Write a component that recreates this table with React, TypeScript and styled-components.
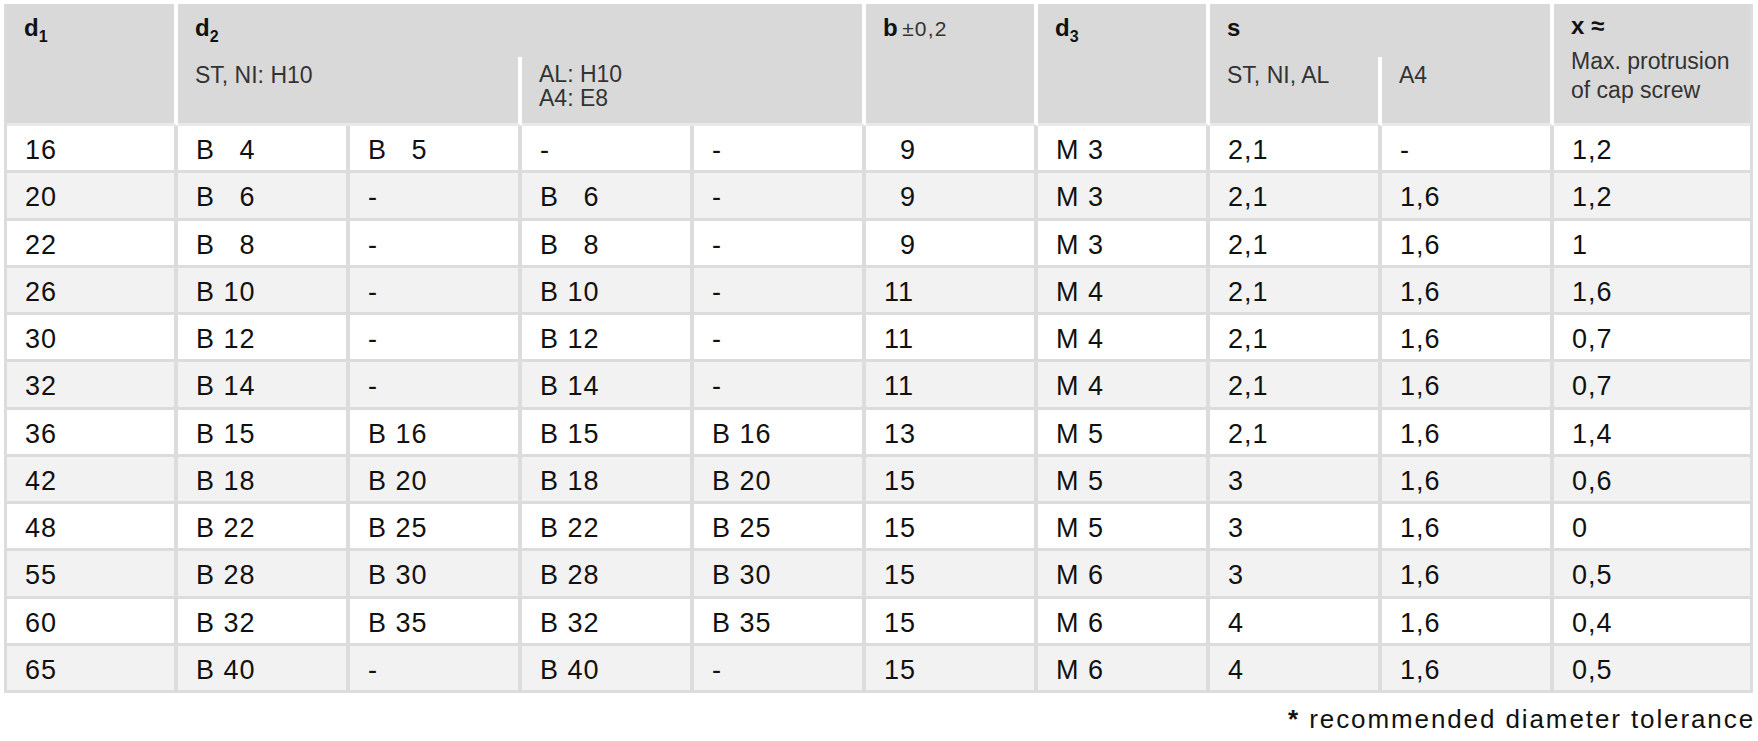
import * as React from 'react';
import styled, { createGlobalStyle } from 'styled-components';

const GlobalStyle = createGlobalStyle`
  body {
    margin: 0;
    background: #fff;
    font-family: "Liberation Sans", Arial, sans-serif;
    color: #111;
  }
`;

// widths of the 10 columns, right border included
const colWidths = [171, 172, 172, 172, 172, 172, 172, 172, 172, 196];

// "#" stands for a hidden digit, so that "B  4" lines up with "B 14"
const rows: string[][] = [
    ['16', 'B #4', 'B #5', '-', '-', '#9', 'M 3', '2,1', '-', '1,2'],
    ['20', 'B #6', '-', 'B #6', '-', '#9', 'M 3', '2,1', '1,6', '1,2'],
    ['22', 'B #8', '-', 'B #8', '-', '#9', 'M 3', '2,1', '1,6', '1'],
    ['26', 'B 10', '-', 'B 10', '-', '11', 'M 4', '2,1', '1,6', '1,6'],
    ['30', 'B 12', '-', 'B 12', '-', '11', 'M 4', '2,1', '1,6', '0,7'],
    ['32', 'B 14', '-', 'B 14', '-', '11', 'M 4', '2,1', '1,6', '0,7'],
    ['36', 'B 15', 'B 16', 'B 15', 'B 16', '13', 'M 5', '2,1', '1,6', '1,4'],
    ['42', 'B 18', 'B 20', 'B 18', 'B 20', '15', 'M 5', '3', '1,6', '0,6'],
    ['48', 'B 22', 'B 25', 'B 22', 'B 25', '15', 'M 5', '3', '1,6', '0'],
    ['55', 'B 28', 'B 30', 'B 28', 'B 30', '15', 'M 6', '3', '1,6', '0,5'],
    ['60', 'B 32', 'B 35', 'B 32', 'B 35', '15', 'M 6', '4', '1,6', '0,4'],
    ['65', 'B 40', '-', 'B 40', '-', '15', 'M 6', '4', '1,6', '0,5'],
];

const renderValue = (v: string) => {
    const parts = v.split('#');
    return parts.map((p, i) => (
        <React.Fragment key={i}>
            {i > 0 && <Ghost>0</Ghost>}
            {p}
        </React.Fragment>
    ));
};

export default function App() {
    return (
        <Page>
            <GlobalStyle />
            <Table>
                <colgroup>
                    {colWidths.map((w, i) => <Col key={i} $w={w} />)}
                </colgroup>
                <thead>
                    <HeadRow $h={53}>
                        <HeadCell rowSpan={2}>
                            <Label>d<Sub>1</Sub></Label>
                        </HeadCell>
                        <HeadCell colSpan={4} $open>
                            <Label>d<Sub>2</Sub></Label>
                        </HeadCell>
                        <HeadCell rowSpan={2}>
                            <Label>b</Label> <Tol>±0,2</Tol>
                        </HeadCell>
                        <HeadCell rowSpan={2}>
                            <Label>d<Sub>3</Sub></Label>
                        </HeadCell>
                        <HeadCell colSpan={2} $open>
                            <Label>s</Label>
                        </HeadCell>
                        <HeadCell rowSpan={2} $last $top={8}>
                            <Label>x ≈</Label>
                            <XNotes>
                                <Note>Max. protrusion</Note>
                                <Note>of cap screw</Note>
                            </XNotes>
                        </HeadCell>
                    </HeadRow>
                    <HeadRow $h={69}>
                        <HeadCell colSpan={2} $top={6}>
                            <Note>ST, NI: H10</Note>
                        </HeadCell>
                        <HeadCell colSpan={2} $top={5}>
                            <Note>AL: H10</Note>
                            <Note>A4: E8</Note>
                        </HeadCell>
                        <HeadCell $top={6}>
                            <Note>ST, NI, AL</Note>
                        </HeadCell>
                        <HeadCell $top={6}>
                            <Note>A4</Note>
                        </HeadCell>
                    </HeadRow>
                </thead>
                <tbody>
                    {rows.map((r, i) => (
                        <BodyRow key={r[0]} $alt={i % 2 === 1}>
                            {r.map((v, j) => (
                                <Cell key={j} $last={j === r.length - 1}>
                                    {renderValue(v)}
                                </Cell>
                            ))}
                        </BodyRow>
                    ))}
                </tbody>
            </Table>
            <Footnote><Star>*</Star> recommended diameter tolerance</Footnote>
        </Page>
    );
}

const Page = styled.div`
    width: 1749px;
    padding: 4px 0 0 4px;
`;

const Table = styled.table`
    width: 1749px;
    table-layout: fixed;
    border-collapse: separate;
    border-spacing: 0;
    border-left: 3px solid #dcdcdc;
    border-right: 3px solid #dcdcdc;
`;

const Col = styled.col<{ $w: number }>`
    width: ${p => p.$w}px;
`;

const HeadRow = styled.tr<{ $h: number }>`
    height: ${p => p.$h}px;
`;

const HeadCell = styled.th<{ $open?: boolean; $last?: boolean; $top?: number }>`
    box-sizing: border-box;
    background: #d9d9d9;
    text-align: left;
    vertical-align: top;
    font-weight: normal;
    padding: ${p => p.$top ?? 10}px 0 0 17px;
    border-right: ${p => (p.$last ? 'none' : '4px solid #fff')};
    border-bottom: ${p => (p.$open ? 'none' : '3px solid #e9e9e9')};
`;

const Label = styled.span`
    font-weight: bold;
    font-size: 24px;
    line-height: 28px;
    color: #111;
`;

const Sub = styled.sub`
    font-size: 16px;
    line-height: 0;
    vertical-align: -6px;
`;

const Tol = styled.span`
    font-size: 21px;
    letter-spacing: 1.2px;
    color: #333;
`;

const XNotes = styled.div`
    margin-top: 7px;
    line-height: 29px;
`;

const Note = styled.div`
    font-size: 23px;
    line-height: inherit;
    color: #333;
    white-space: nowrap;
    th > & {
        line-height: 24px;
    }
`;

const BodyRow = styled.tr<{ $alt: boolean }>`
    height: 47.25px;
    background: ${p => (p.$alt ? '#f2f2f2' : '#fff')};
`;

const Cell = styled.td<{ $last?: boolean }>`
    box-sizing: border-box;
    padding: 4px 0 0 18px;
    vertical-align: top;
    font-size: 27px;
    line-height: 40px;
    letter-spacing: 1px;
    white-space: nowrap;
    color: #111;
    border-right: ${p => (p.$last ? 'none' : '4px solid #dcdcdc')};
    border-bottom: 3px solid #dcdcdc;
`;

const Ghost = styled.span`
    visibility: hidden;
`;

const Footnote = styled.div`
    margin-top: 11px;
    margin-right: -2px;
    text-align: right;
    font-size: 26px;
    line-height: 30px;
    letter-spacing: 1.9px;
    color: #111;
`;

const Star = styled.span`
    font-weight: bold;
`;
